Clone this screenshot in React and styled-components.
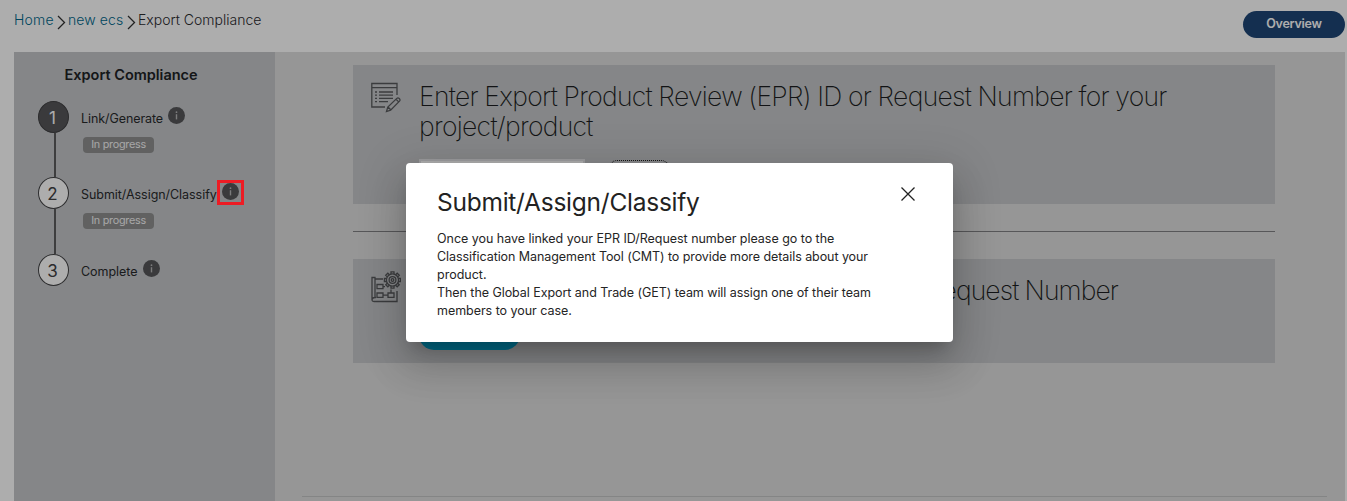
import React from "react";
import styled, { createGlobalStyle } from "styled-components";

const GlobalStyle = createGlobalStyle`
  * { box-sizing: border-box; }
  body {
    margin: 0;
    background: #fff;
    color: #282a2c;
    font-family: Inter, "Liberation Sans", sans-serif;
    overflow: hidden;
  }
  h1, h2, p { margin: 0; }
`;

const Page = styled.div`
  display: flex;
  flex-direction: column;
  height: 501px;
  width: 1347px;
  padding: 0 2px 0 14px;
`;

const TopBar = styled.header`
  display: flex;
  justify-content: space-between;
  flex: 0 0 52px;
`;

const Breadcrumb = styled.nav`
  display: flex;
  height: 40px;
  align-items: center;
  font-size: 14px;
  font-weight: 350;
  line-height: 20px;
  white-space: nowrap;
`;

const Crumb = styled.span`
  width: ${(p) => p.$width}px;
  color: ${(p) => (p.$link ? "#00688c" : "#2b2b2f")};
  letter-spacing: ${(p) => p.$spacing || 0}px;
`;

const Separator = styled.svg`
  width: 9px;
  height: 15px;
  margin: 4px 2px 0 3px;
  fill: none;
  stroke: #333;
  stroke-width: 1.3;
`;

const OverviewButton = styled.button`
  width: 102px;
  height: 27px;
  margin-top: 11px;
  padding: 0 0 1px;
  border: 0;
  border-radius: 14px;
  background: #1e4676;
  color: #fff;
  font: 600 12.5px/26px Inter, sans-serif;
  letter-spacing: -0.25px;
`;

const Body = styled.div`
  display: flex;
  flex: 1;
`;

const Sidebar = styled.aside`
  width: 261px;
  background: #c4c6c9;
`;

const SidebarTitle = styled.h2`
  padding: 13px 0 0 50.5px;
  font-size: 14.5px;
  line-height: 20px;
  font-weight: 600;
  color: #202225;
  white-space: nowrap;
`;

const Steps = styled.div`
  padding: 16px 0 0 24px;
`;

const Step = styled.div`
  display: flex;
  gap: 12px;
  height: 76.4px;
`;

const Track = styled.div`
  display: flex;
  flex-direction: column;
  align-items: center;
  width: 31px;
`;

const StepNumber = styled.div`
  flex: 0 0 31px;
  width: 31px;
  padding: 2px 2px 0 0;
  border: 1px solid #414143;
  border-radius: 50%;
  background: ${(p) => (p.$active ? "#565659" : "#fff")};
  color: ${(p) => (p.$active ? "#fff" : "#414143")};
  font-size: 17px;
  line-height: 28px;
  text-align: center;
`;

const Connector = styled.div`
  flex: 1;
  width: 2px;
  margin-left: 3px;
  background: #5c5c5e;
`;

const StepText = styled.div`
  padding-top: 6px;
`;

const StepLabel = styled.div`
  display: flex;
  height: 20px;
  gap: ${(p) => p.$gap}px;
  font-size: 12.5px;
  line-height: 23px;
  white-space: nowrap;
  letter-spacing: ${(p) => p.$spacing || 0}px;
`;

const InfoDot = styled.svg`
  display: block;
  width: 17px;
  height: 17px;
`;

const Highlighted = styled.span`
  position: relative;
  height: 17px;
`;

const HighlightBox = styled.span`
  position: absolute;
  z-index: 20;
  left: -5px;
  top: -3px;
  width: 27px;
  height: 25px;
  border: 3px solid #ed1c24;
`;

const Badge = styled.div`
  width: 71px;
  height: 16px;
  margin: 10px 0 0 2px;
  border-radius: 4px;
  background: #8f8f90;
  color: #f6f6f6;
  font-size: 10.8px;
  line-height: 15px;
  letter-spacing: -0.25px;
  text-align: center;
  white-space: nowrap;
`;

const Main = styled.main`
  display: flex;
  flex-direction: column;
  flex: 1;
  padding: 13px 18px 4px 27px;
  background: #dddddd;
`;

const Card = styled.section`
  display: flex;
  gap: 18px;
  height: ${(p) => p.$height}px;
  margin: 0 52px 0 51px;
  padding: 16px 0 0 18px;
  background: #c4c6c9;
`;

const CardIcon = styled.svg`
  flex: 0 0 30px;
  height: 32px;
  margin-top: ${(p) => p.$top}px;
  fill: none;
  stroke: #58595c;
  stroke-width: 1.3;
`;

const CardContent = styled.div`
  flex: 1;
`;

const CardTitle = styled.h1`
  width: ${(p) => (p.$width ? `${p.$width}px` : "auto")};
  text-align: ${(p) => (p.$width ? "right" : "left")};
  font-size: 26.5px;
  line-height: 30px;
  font-weight: 200;
  letter-spacing: ${(p) => p.$spacing}px;
  word-spacing: -0.4px;
  white-space: nowrap;
  color: #1b1d20;
`;

const FormRow = styled.div`
  display: flex;
  gap: 25px;
  margin-top: 18px;
`;

const RequestInput = styled.input`
  width: 166px;
  height: 30px;
  border: 2px solid #e5e5e8;
  background: #fff;
`;

const DottedButton = styled.button`
  width: 60px;
  height: 28px;
  margin: 1px 0 0 -1px;
  border: 1px dotted #222;
  border-radius: 8px;
  background: transparent;
`;

const GenerateButton = styled.button`
  display: block;
  width: 101px;
  height: 30px;
  margin-top: 15px;
  border: 0;
  border-radius: 15px;
  background: #00a5d0;
`;

const Divider = styled.div`
  height: 1px;
  margin: 27px 52px 27px 51px;
  background: #808184;
`;

const FooterLine = styled.div`
  height: 1px;
  margin-top: auto;
  background: #c3c4c5;
`;

const Backdrop = styled.div`
  position: absolute;
  z-index: 10;
  inset: 0;
  width: 1347px;
  height: 501px;
  background: rgba(0, 0, 0, 0.32);
`;

const Dialog = styled.div`
  position: absolute;
  z-index: 30;
  left: 406px;
  top: 163px;
  width: 547px;
  height: 179px;
  padding: 23px 37px 0 31px;
  border-radius: 4px;
  background: #fff;
  box-shadow: 0 11px 15px -7px rgba(0, 0, 0, 0.2),
    0 24px 38px 3px rgba(0, 0, 0, 0.14), 0 9px 46px 8px rgba(0, 0, 0, 0.12);
`;

const DialogHeader = styled.div`
  display: flex;
  justify-content: space-between;
  height: 44px;
`;

const DialogTitle = styled.h2`
  font-size: 24.5px;
  line-height: 32px;
  font-weight: 400;
  letter-spacing: -0.25px;
  color: #222;
  white-space: nowrap;
`;

const CloseIcon = styled.svg`
  width: 16px;
  height: 16px;
  stroke: #222;
  stroke-width: 1.3;
`;

const DialogText = styled.p`
  color: #252525;
  font-size: 12.5px;
  line-height: 18px;
  white-space: nowrap;
`;

const Line = styled.span`
  display: block;
  letter-spacing: ${(p) => p.$spacing || 0}px;
`;

const Chevron = () => (
  <Separator viewBox="0 0 9 15"><path d="M1 1l6.5 6.5L1 14" /></Separator>
);

const Info = () => (
  <InfoDot viewBox="0 0 17 17">
    <circle cx="8.5" cy="8.5" r="8.5" fill="#565659" />
    <path d="M8.5 7.2v5.2" stroke="#b5b5b7" strokeWidth="1.4" />
    <circle cx="8.5" cy="5.2" r=".9" fill="#b5b5b7" />
  </InfoDot>
);

const FormIcon = () => (
  <CardIcon $top={1} viewBox="0 0 30 32">
    <path d="M26 13V1.5H.8V25H14M1 5.7h25" />
    <path d="M4 10h2M8 10h14M4 13.2h2M8 13.2h14M4 16.4h2M8 16.4h14M4 19.6h2M8 19.6h9" />
    <path d="M15.5 29.5l1.3-4.4 9-8.7q1.2-1 2.5.2t.2 2.5l-8.9 9.1zM17 25l2.8 2.8M25 17.2l2.7 2.7" />
  </CardIcon>
);

const teeth = Array.from({ length: 8 }, (_, i) => i * 45);

const ProjectIcon = () => (
  <CardIcon $top={-4} viewBox="0 0 30 32">
    <path d="M12 8H4M4 27V6.5H1V29q0 1.5 2 1.5h23V20M1 29q0-2.5 3-2.5h1" />
    <path d="M6 13.5h6v4.2H6zM6 22h6v4.3H6zM17 22h6v4.3h-6zM12 24.2h5M20 22v-3.5M12 15.6h2" />
    <circle cx="21.5" cy="9" r="6.1" />
    <circle cx="21.5" cy="9" r="3.4" />
    <circle cx="21.5" cy="9" r="1.3" />
    {teeth.map((a) => (
      <path key={a} transform={`rotate(${a} 21.5 9)`} d="M20 3.1V.9h3v2.2" />
    ))}
  </CardIcon>
);

export default function App() {
  return (
    <>
      <GlobalStyle />
      <Page>
        <TopBar>
          <Breadcrumb>
            <Crumb $link $width={40} $spacing={0.2}>Home</Crumb>
            <Chevron />
            <Crumb $link $width={56} $spacing={0.1}>new ecs</Crumb>
            <Chevron />
            <Crumb $width={125}>Export Compliance</Crumb>
          </Breadcrumb>
          <OverviewButton>Overview</OverviewButton>
        </TopBar>
        <Body>
          <Sidebar>
            <SidebarTitle>Export Compliance</SidebarTitle>
            <Steps>
              <Step>
                <Track><StepNumber $active>1</StepNumber><Connector /></Track>
                <StepText>
                  <StepLabel $gap={5} $spacing={-0.08}>Link/Generate<Info /></StepLabel>
                  <Badge>In progress</Badge>
                </StepText>
              </Step>
              <Step>
                <Track><StepNumber>2</StepNumber><Connector /></Track>
                <StepText>
                  <StepLabel $gap={5} $spacing={-0.05}>
                    Submit/Assign/Classify
                    <Highlighted><Info /><HighlightBox /></Highlighted>
                  </StepLabel>
                  <Badge>In progress</Badge>
                </StepText>
              </Step>
              <Step>
                <Track><StepNumber>3</StepNumber></Track>
                <StepText>
                  <StepLabel $gap={5.5} $spacing={-0.03}>Complete<Info /></StepLabel>
                </StepText>
              </Step>
            </Steps>
          </Sidebar>
          <Main>
            <Card $height={139}>
              <FormIcon />
              <CardContent>
                <CardTitle $spacing={-0.7}>
                  Enter Export Product Review (EPR) ID or Request Number for your<br />
                  project/product
                </CardTitle>
                <FormRow><RequestInput /><DottedButton /></FormRow>
              </CardContent>
            </Card>
            <Divider />
            <Card $height={104}>
              <ProjectIcon />
              <CardContent>
                <CardTitle $width={699} $spacing={-0.9}>Request Number</CardTitle>
                <GenerateButton />
              </CardContent>
            </Card>
            <FooterLine />
          </Main>
        </Body>
      </Page>
      <Backdrop />
      <Dialog role="dialog">
        <DialogHeader>
          <DialogTitle>Submit/Assign/Classify</DialogTitle>
          <CloseIcon viewBox="0 0 16 16"><path d="M1.5 1.5l13 13M14.5 1.5l-13 13" /></CloseIcon>
        </DialogHeader>
        <DialogText>
          <Line $spacing={-0.03}>Once you have linked your EPR ID/Request number please go to the</Line>
          <Line $spacing={-0.07}>Classification Management Tool (CMT) to provide more details about your</Line>
          <Line>product.</Line>
          <Line $spacing={-0.055}>Then the Global Export and Trade (GET) team will assign one of their team</Line>
          <Line $spacing={-0.04}>members to your case.</Line>
        </DialogText>
      </Dialog>
    </>
  );
}
